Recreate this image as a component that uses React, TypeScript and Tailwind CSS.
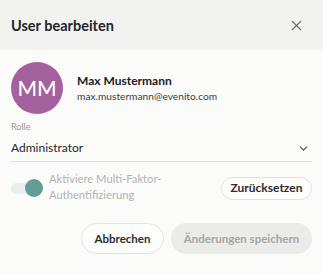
import { X, ChevronDown } from "lucide-react";

export default function App() {
  return (
    <div className="w-[323px] h-[274px] bg-[#fbfbfa] text-[#26262b] overflow-hidden" style={{ fontFamily: 'Lato, "Open Sans", sans-serif' }}>
      {/* Header */}
      <div className="h-[50px] bg-[#f2f2f0] flex items-center justify-between pl-[11px] pr-[18px]">
        <h1 className="text-[14.5px] font-bold pt-[1px] text-[#26262b]">User bearbeiten</h1>
        <X className="h-[17px] w-[17px] text-[#6b6b70]" strokeWidth={1.6} />
      </div>

      <div className="px-[11px]">
        {/* User */}
        <div className="flex items-center gap-[14px] pt-[12px]">
          <div className="h-[52px] w-[52px] rounded-full bg-[#a4619e] flex items-center justify-center text-white text-[21px] font-medium">
            MM
          </div>
          <div className="flex flex-col">
            <span className="text-[12px] font-bold leading-[16px] text-[#202024]">Max Mustermann</span>
            <span className="text-[10.2px] leading-[15px] text-[#3c3c40]">max.mustermann@evenito.com</span>
          </div>
        </div>

        {/* Rolle */}
        <div className="mt-[7px]">
          <div className="text-[9px] leading-[12px] text-[#9a9a9a]">Rolle</div>
          <div className="flex items-center justify-between border-b border-[#e3e3e3] h-[29px] pt-[2px]">
            <span className="text-[12px] text-[#26262b]">Administrator</span>
            <ChevronDown className="h-[13px] w-[13px] mr-[2px] text-[#505055]" strokeWidth={2.2} />
          </div>
        </div>

        {/* MFA */}
        <div className="flex items-center justify-between mt-[11px]">
          <div className="flex items-center gap-[6px]">
            <div className="relative w-[32px] h-[18px] flex items-center">
              <div className="h-[11px] w-[30px] rounded-full bg-[#e8f0ee]" />
              <div className="absolute right-0 top-0 h-[18px] w-[18px] rounded-full bg-[#659d94]" />
            </div>
            <span className="text-[11.2px] leading-[16px] text-[#b3b3b3] w-[135px] -mt-[2px]">Aktiviere Multi-Faktor-Authentifizierung</span>
          </div>
          <button className="h-[23px] w-[91px] rounded-full border border-[#e2e2e2] bg-[#fdfdfc] text-[12px] font-bold text-[#2c2c30]">
            Zurücksetzen
          </button>
        </div>

        {/* Actions */}
        <div className="flex justify-end gap-[7px] mt-[20px]">
          <button className="h-[31px] w-[83px] rounded-full border border-[#e4e4e4] bg-[#fdfdfc] text-[11.5px] font-bold text-[#2c2c30]">
            Abbrechen
          </button>
          <button className="h-[31px] w-[141px] rounded-full bg-[#ebebea] text-[11.5px] font-bold text-[#a5a5a5]">
            Änderungen speichern
          </button>
        </div>
      </div>
    </div>
  );
}
